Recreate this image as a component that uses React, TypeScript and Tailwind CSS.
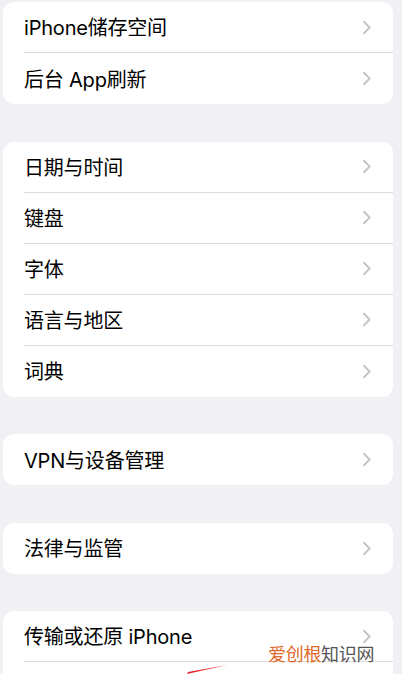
const groups: string[][] = [
  ["iPhone储存空间", "后台 App刷新"],
  ["日期与时间", "键盘", "字体", "语言与地区", "词典"],
  ["VPN与设备管理"],
  ["法律与监管"],
  ["传输或还原 iPhone", ""],
];

function Chevron() {
  return (
    <svg width="10" height="15" viewBox="0 0 10 15" className="shrink-0">
      <path
        d="M2 1.8 L7.6 7.5 L2 13.2"
        fill="none"
        stroke="#c5c5c8"
        strokeWidth="2"
        strokeLinecap="round"
        strokeLinejoin="round"
      />
    </svg>
  );
}

export default function App() {
  return (
    <div
      className="relative h-[674px] w-[402px] overflow-hidden bg-[#f0f0f5] pt-[2px] pl-[3px] pr-[9px]"
      style={{ fontFamily: 'Inter, "Noto Sans CJK SC", sans-serif' }}
    >
      <div className="flex flex-col gap-[37.5px]">
        {groups.map((rows, gi) => (
          <div key={gi} className="overflow-hidden rounded-[11px] bg-white">
            {rows.map((label, ri) => (
              <div key={ri} className="flex h-[51px] pl-[21px]">
                <div
                  className={
                    "flex flex-1 items-center justify-between pr-[21px] " +
                    (ri < rows.length - 1 ? "border-b border-[#dcdcdf]" : "")
                  }
                >
                  <span className="pt-[2px] text-[20px] leading-[24px] tracking-[-0.2px] text-black">
                    {label}
                  </span>
                  {label ? <Chevron /> : null}
                </div>
              </div>
            ))}
          </div>
        ))}
      </div>

      {/* watermark */}
      <div className="absolute left-[268px] top-[645px] text-[18px] leading-[20px] tracking-[-0.3px]">
        <span className="text-[#e0692b]">爱创根</span>
        <span className="text-[#555555]">知识网</span>
      </div>

      {/* red arrow tail */}
      <svg className="absolute left-[185px] top-[662px]" width="50" height="12" viewBox="0 0 50 12">
        <polygon points="2,12 42,3 3,10" fill="#e8262c" />
      </svg>
    </div>
  );
}
